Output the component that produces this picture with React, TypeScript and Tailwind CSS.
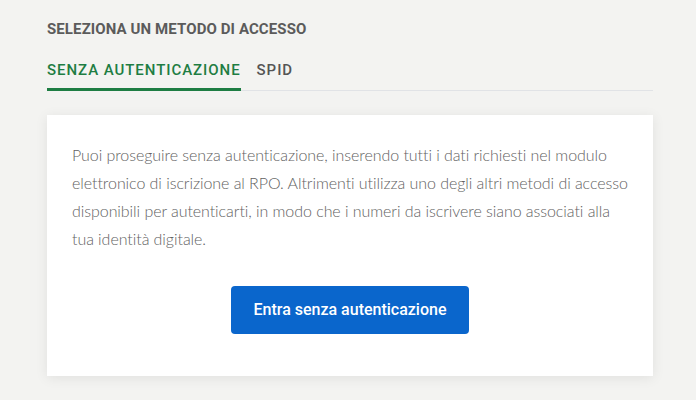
export default function App() {
    return (
        <div className="w-[696px] h-[400px] bg-[#f3f3f1] overflow-hidden" style={{ fontFamily: 'Roboto, "Open Sans", sans-serif' }}>
            <div className="pl-[47px] pr-[43px] pt-[19px]">
                <h2 className="text-[15px] font-bold text-[#5b5b5b] uppercase tracking-[0.1px] leading-5">Seleziona un metodo di accesso</h2>
                <div className="mt-[21px] flex items-end border-b border-[#e1e3e6]">
                    <div className="pb-[8px] border-b-[3px] border-[#1e7d43] -mb-px text-[15px] font-medium tracking-[0.95px] text-[#1e7d43] leading-5">SENZA AUTENTICAZIONE</div>
                    <div className="pb-[8px] ml-4 text-[15px] font-medium tracking-[0.95px] text-[#555] leading-5 mb-[2px]">SPID</div>
                </div>
                <div className="mt-[24px] bg-white shadow-[0_2px_12px_rgba(0,0,0,0.08)] pt-[26px] pb-[42px] px-[25px]">
                    <p className="text-[16px] font-light leading-[28px] tracking-[-0.06px] text-[#626262] whitespace-nowrap" style={{ fontFamily: 'Lato, Roboto, sans-serif' }}>
                        Puoi proseguire senza autenticazione, inserendo tutti i dati richiesti nel modulo<br />
                        elettronico di iscrizione al RPO. Altrimenti utilizza uno degli altri metodi di accesso<br />
                        disponibili per autenticarti, in modo che i numeri da iscrivere siano associati alla<br />
                        tua identità digitale.
                    </p>
                    <div className="mt-[33px] flex justify-center">
                        <button className="w-[238px] h-[48px] rounded bg-[#0a66cc] text-white text-[16px] font-medium">Entra senza autenticazione</button>
                    </div>
                </div>
            </div>
        </div>
    );
}
